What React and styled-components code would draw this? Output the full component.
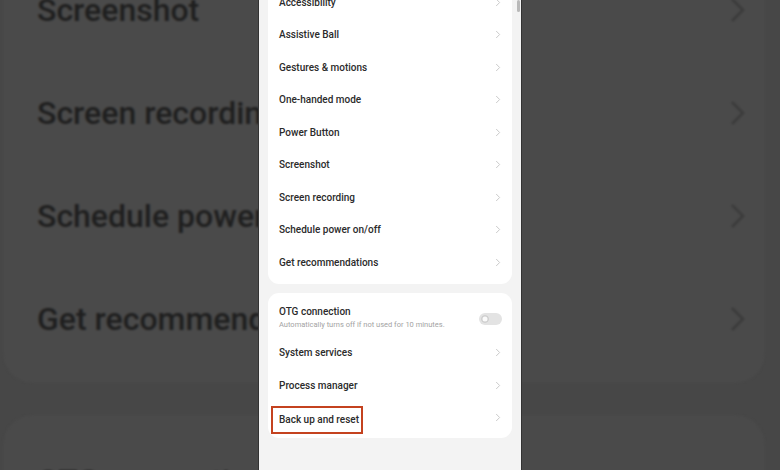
import React from 'react'
import styled, { createGlobalStyle } from 'styled-components'

const Global = createGlobalStyle`
  html, body {
    margin: 0;
    padding: 0;
    width: 780px;
    height: 470px;
    overflow: hidden;
    background: #4a4a4a;
  }
  * { box-sizing: border-box; }
`

const Page = styled.div`
  position: relative;
  width: 780px;
  height: 470px;
  overflow: hidden;
  display: flex;
  justify-content: center;
  background: #474747;
  font-family: Roboto, "Liberation Sans", sans-serif;
`

/* blurred, zoomed copy of the list behind the phone */
const Backdrop = styled.div`
  position: absolute;
  inset: 0;
  display: flex;
  flex-direction: column;
  filter: blur(1.1px);
`
const BgCard = styled.div`
  margin: ${({top}) => top}px 15px 0 3px;
  padding-bottom: ${({pb}) => pb || 0}px;
  padding-top: ${({pt}) => pt || 0}px;
  background: #4a4a4a;
  border-radius: 30px;
  flex-shrink: 0;
`
const BgRow = styled.div`
  height: ${({h}) => h || 103}px;
  display: flex;
  align-items: center;
  justify-content: space-between;
  padding: 0 19px 0 34px;
  font-size: 32px;
  font-weight: 500;
  color: #1f1f1f;
  white-space: nowrap;
`
const BgChevron = () => (
  <svg width="16" height="26" viewBox="0 0 16 26">
    <path d="M2 2 L13 13 L2 24" fill="none" stroke="#3b3b3b" strokeWidth="2.5" />
  </svg>
)

const Phone = styled.div`
  position: relative;
  z-index: 1;
  width: 264px;
  height: 470px;
  flex-shrink: 0;
  background: #f3f3f3;
  border-left: 1px solid #333;
  border-right: 1px solid #333;
  padding: 0 9px;
  display: flex;
  flex-direction: column;
`
const ScrollBar = styled.div`
  position: absolute;
  right: 1px;
  top: 0;
  width: 3px;
  height: 12px;
  border-radius: 2px;
  background: #b9b9b9;
`
const Card = styled.div`
  margin-top: ${({top}) => top}px;
  background: #fff;
  border-radius: 11px;
  padding: ${({pad}) => pad};
  flex-shrink: 0;
`
const Row = styled.div`
  height: 32.5px;
  display: flex;
  align-items: center;
  justify-content: space-between;
  padding: 0 11px 0 11px;
`
const Label = styled.span`
  font-size: 10px;
  font-weight: 500;
  color: #2b2b2b;
  white-space: nowrap;
`
const Highlight = styled(Label)`
  display: inline-flex;
  align-items: center;
  height: 28px;
  margin: 4px 0 0 -8px;
  padding: 0 2px 0 6px;
  border: 2px solid #c4421f;
`
const OtgRow = styled.div`
  height: 39px;
  display: flex;
  align-items: center;
  justify-content: space-between;
  padding: 0 11px;
`
const OtgText = styled.div`
  display: flex;
  flex-direction: column;
  gap: 3px;
`
const Hint = styled.span`
  font-size: 7.5px;
  color: #a3a3a3;
  white-space: nowrap;
`
const Toggle = styled.div`
  width: 23px;
  height: 12px;
  border-radius: 6px;
  background: #e3e3e3;
  display: flex;
  align-items: center;
  padding-left: 2px;
  margin-top: 3px;
  margin-right: -1px;
  &::after {
    content: '';
    width: 8px;
    height: 8px;
    border-radius: 50%;
    background: #fafafa;
    box-shadow: inset 0 0 0 1.5px #cfcfcf;
  }
`
const Chevron = () => (
  <svg width="6" height="9" viewBox="0 0 6 9">
    <path d="M1.2 1 L4.6 4.5 L1.2 8" fill="none" stroke="#cbcbcb" strokeWidth="1" />
  </svg>
)

const general = [
  'Accessibility',
  'Assistive Ball',
  'Gestures & motions',
  'One-handed mode',
  'Power Button',
  'Screenshot',
  'Screen recording',
  'Schedule power on/off',
  'Get recommendations',
]

export default function App() {
  return (
    <Page>
      <Global />
      <Backdrop>
        <BgCard top={-42} pb={13}>
          {['Screenshot', 'Screen recording', 'Schedule power on/off', 'Get recommendations'].map(t => (
            <BgRow key={t}>
              <span>{t}</span>
              <BgChevron />
            </BgRow>
          ))}
        </BgCard>
        <BgCard top={32} pt={46}>
          <BgRow h={40}>
            <span>OTG connection</span>
          </BgRow>
        </BgCard>
      </Backdrop>
      <Phone>
        <ScrollBar />
        <Card top={-14} pad="0 0 5px">
          {general.map(t => (
            <Row key={t}>
              <Label>{t}</Label>
              <Chevron />
            </Row>
          ))}
        </Card>
        <Card top={9} pad="5px 0 4px">
          <OtgRow>
            <OtgText>
              <Label>OTG connection</Label>
              <Hint>Automatically turns off if not used for 10 minutes.</Hint>
            </OtgText>
            <Toggle />
          </OtgRow>
          <Row>
            <Label>System services</Label>
            <Chevron />
          </Row>
          <Row>
            <Label>Process manager</Label>
            <Chevron />
          </Row>
          <Row>
            <Highlight>Back up and reset</Highlight>
            <Chevron />
          </Row>
        </Card>
      </Phone>
    </Page>
  )
}
